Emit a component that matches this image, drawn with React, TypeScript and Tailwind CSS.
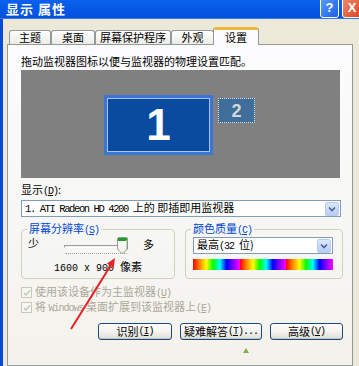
import React from "react";

const cjk = "font-['Noto_Sans_CJK_SC',sans-serif]";
const mono = "font-['Liberation_Mono','Noto_Sans_CJK_SC',monospace]";

function Key({ k }: { k: string }) {
  return (
    <span className={`${mono} text-[10px] tracking-[-1px]`}>
      (<span className="underline">{k}</span>)
    </span>
  );
}

function Chevron() {
  return (
    <div className="w-[14px] h-[14px] rounded-[2px] border border-[#B9CCF6] bg-gradient-to-b from-[#DCE7FE] to-[#B7CBF7] flex items-center justify-center">
      <svg width="8" height="6" viewBox="0 0 8 6">
        <path d="M1 1.5 L4 4.5 L7 1.5" fill="none" stroke="#4D6185" strokeWidth="1.6" />
      </svg>
    </div>
  );
}

function Tab({ label, w, active }: { label: string; w: number; active?: boolean }) {
  if (active) {
    return (
      <div
        style={{ width: w }}
        className="relative z-10 -mb-px -mx-[1px] h-[18px] border-x border-[#919B9C] border-t-[3px] border-t-[#F7B73A] rounded-t-[3px] bg-[#FCFCFE] text-center leading-[14px]"
      >
        {label}
      </div>
    );
  }
  return (
    <div
      style={{ width: w }}
      className="h-[14px] border border-b-0 border-[#919B9C] rounded-t-[3px] bg-gradient-to-b from-white to-[#ECEBE5] text-center leading-[13px]"
    >
      {label}
    </div>
  );
}

function Check({ children }: { children: React.ReactNode }) {
  return (
    <div className="flex items-center h-[15px] text-[#ACA899]">
      <div className="w-[11px] h-[11px] border border-[#CAC8BB] bg-[#F7F7F2] flex items-center justify-center">
        <svg width="8" height="8" viewBox="0 0 8 8">
          <path d="M1 4 L3 6 L7 1.5" fill="none" stroke="#C6C4B6" strokeWidth="1.5" />
        </svg>
      </div>
      <span className="ml-[3px] leading-[13px]">{children}</span>
    </div>
  );
}

function Btn({ w, children }: { w: number; children: React.ReactNode }) {
  return (
    <div
      style={{ width: w }}
      className="h-[17px] border border-[#1C4A7C] rounded-[3px] bg-gradient-to-b from-white via-[#F4F3EF] to-[#DEDDD5] flex items-center justify-center leading-none shadow-[inset_0_-1px_0_#C9C7BC]"
    >
      {children}
    </div>
  );
}

export default function App() {
  return (
    <div className={`relative w-[359px] h-[366px] overflow-hidden bg-[#ECE9D8] ${cjk} text-[11px] text-black`}>
      {/* title bar */}
      <div className="h-[19px] flex justify-between bg-gradient-to-b from-[#0C62EE] via-[#0657E5] to-[#0352DD] border-b border-[#2F7BF4]">
        <span className="pl-[6px] pt-[2px] text-white font-bold text-[13px] leading-[14px] tracking-[1px]">显示 属性</span>
        <div className="flex gap-[3px] -mt-[3px] -mr-[3px]">
          <div className="w-[19px] h-[21px] rounded-[3px] border border-white bg-gradient-to-br from-[#5C9DFF] to-[#1B5CE6] flex items-center justify-center text-white font-bold text-[13px] font-['Liberation_Sans',sans-serif]">
            ?
          </div>
          <div className="w-[20px] h-[21px] rounded-[3px] border border-white bg-gradient-to-br from-[#F08B6B] to-[#D9401C] flex items-center justify-center text-white font-bold text-[13px] font-['Liberation_Sans',sans-serif]">
            X
          </div>
        </div>
      </div>

      <div className="flex h-[347px]">
        <div className="w-[3px] bg-[#0A48D8]" />
        <div className="flex flex-col pl-[4px] pt-[8px]">
          {/* tabs */}
          <div className="flex items-end h-[17px] pl-[2px]">
            <Tab label="主题" w={42} />
            <Tab label="桌面" w={44} />
            <Tab label="屏幕保护程序" w={76} />
            <Tab label="外观" w={43} />
            <Tab label="设置" w={46} active />
          </div>

          {/* panel */}
          <div className="w-[346px] h-[330px] border border-[#919B9C] bg-gradient-to-b from-[#FCFCFE] to-[#F3F2EC] pl-[13px] pt-[9px] flex flex-col">
            <div className="leading-[14px]">拖动监视器图标以便与监视器的物理设置匹配。</div>

            <div className="mt-[2px] w-[319px] h-[108px] bg-[#808080] flex items-start pl-[83px] pt-[25px] gap-[5px]">
              <div className="w-[109px] h-[60px] bg-[#3A76D6] p-[3px]">
                <div className="w-full h-full border border-[#A8C3EE] bg-[#0A4B9F] flex items-center justify-center text-white font-bold text-[44px] leading-none font-['Liberation_Sans',sans-serif]">
                  1
                </div>
              </div>
              <div className="mt-[3px] w-[37px] h-[25px] border border-dotted border-[#E4E4E4] bg-[#3F6E9A] flex items-center justify-center text-[#D3D7DC] font-bold text-[18px] leading-none font-['Liberation_Sans',sans-serif]">
                2
              </div>
            </div>

            <div className="mt-[4px] leading-[14px]">
              显示<Key k="D" />:
            </div>
            <div className="mt-[1px] w-[320px] h-[17px] border border-[#7F9DB9] bg-white flex items-center justify-between pl-[3px] pr-[1px]">
              <span className="leading-none">
                <span className={`${mono} text-[10.5px] tracking-[-1.4px]`}>1. ATI Radeon HD 4200 </span>
                上的 即插即用监视器
              </span>
              <Chevron />
            </div>

            {/* group boxes */}
            <div className="mt-[5px] flex gap-[10px]">
              <fieldset className="w-[154px] h-[57px] border border-[#D0D0BF] rounded-[4px]">
                <legend className="ml-[5px] px-[2px] text-[#0046D5] leading-[13px]">
                  屏幕分辨率<Key k="S" />
                </legend>
                <div className="flex items-start h-[18px] pl-[6px] mt-[1px]">
                  <span className="leading-[11px]">少</span>
                  <div className="relative ml-[23px] w-[68px] h-[18px]">
                    <div className="absolute left-[2px] top-[7px] w-[60px] h-[3px] border border-[#9D9C99] border-b-white border-r-white bg-[#F3F3EF]" />
                    <div className="absolute left-[3px] top-[15px] w-[62px] h-[1px] border-b border-dotted border-[#A5A5A0]" />
                    <svg className="absolute left-[55px] -top-[1px]" width="11" height="18" viewBox="0 0 11 18">
                      <path d="M0.5 1.5 Q0.5 0.5 1.5 0.5 L9.5 0.5 Q10.5 0.5 10.5 1.5 L10.5 12 L5.5 17 L0.5 12 Z" fill="#F7F7F4" stroke="#8E9C8E" />
                      <rect x="1" y="1" width="9" height="3" fill="#21A121" />
                      <path d="M9.5 3 L9.5 12 L5.5 16" fill="none" stroke="#C9C8BE" />
                    </svg>
                  </div>
                  <span className="ml-[13px] leading-[11px] mt-[1px]">多</span>
                </div>
                <div className="mt-[4px] text-center leading-[13px]">
                  <span className={`${mono} text-[10px]`}>1600 x 900 </span>像素
                </div>
              </fieldset>

              <fieldset className="w-[158px] h-[57px] border border-[#D0D0BF] rounded-[4px]">
                <legend className="ml-[5px] px-[2px] text-[#0046D5] leading-[13px]">
                  颜色质量<Key k="C" />
                </legend>
                <div className="ml-[7px] w-[140px] h-[17px] border border-[#7F9DB9] bg-white flex items-center justify-between pl-[3px] pr-[1px]">
                  <span className="leading-none">
                    最高<span className={`${mono} text-[10px] tracking-[-1px]`}>(32 </span>位)
                  </span>
                  <Chevron />
                </div>
                <div className="ml-[7px] mt-[5px] w-[140px] h-[11px] flex">
                  <div className="flex-1 bg-[linear-gradient(90deg,#f00,#f80,#ff0,#0f0,#0ff,#00f,#80f,#f0f)]" />
                  <div className="flex-1 bg-[linear-gradient(90deg,#f00,#f80,#ff0,#0f0,#0ff,#00f,#80f,#f0f)]" />
                  <div className="flex-1 bg-[linear-gradient(90deg,#f00,#f80,#ff0,#0f0,#0ff,#00f,#80f,#f0f)]" />
                </div>
              </fieldset>
            </div>

            {/* checkboxes */}
            <div className="mt-[6px] flex flex-col">
              <Check>
                使用该设备作为主监视器<Key k="U" />
              </Check>
              <Check>
                将 <span className={`${mono} text-[10px] tracking-[-1px]`}>Windows</span> 桌面扩展到该监视器上<Key k="E" />
              </Check>
            </div>

            {/* buttons */}
            <div className="mt-[8px] flex gap-[8px] pl-[77px]">
              <Btn w={74}>
                识别<Key k="I" />
              </Btn>
              <Btn w={82}>
                疑难解答<Key k="T" />
                <span className={`${mono} text-[10px] tracking-[-1px]`}>...</span>
              </Btn>
              <Btn w={73}>
                高级<Key k="V" />
              </Btn>
            </div>
          </div>
        </div>
      </div>

      {/* red annotation arrow */}
      <svg className="absolute left-0 top-0 pointer-events-none" width="359" height="366" viewBox="0 0 359 366">
        <line x1="71" y1="329" x2="111" y2="265" stroke="#E3232A" strokeWidth="2" />
        <polygon points="115,258 113.7,268 106.9,263.6" fill="#E3232A" />
        <polygon points="246,348 249,353 243,353" fill="#7FB24A" />
      </svg>
    </div>
  );
}
